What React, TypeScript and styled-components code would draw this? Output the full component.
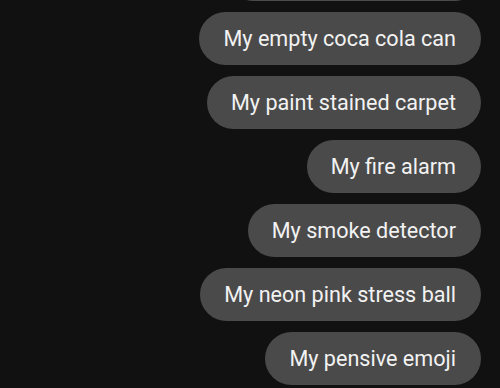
import React from "react";
import styled, { createGlobalStyle } from "styled-components";

const Global = createGlobalStyle`
  html, body { margin: 0; padding: 0; background: #111111; }
  body { width: 500px; height: 388px; overflow: hidden; }
`;

const Thread = styled.div`
  display: flex;
  flex-direction: column;
  align-items: flex-end;
  gap: 11px;
  padding-right: 19px;
  margin-top: -52px;
`;

const Bubble = styled.div`
  box-sizing: border-box;
  height: 53px;
  display: flex;
  align-items: center;
  padding: 0 25px 0 24px;
  border-radius: 27px;
  background: #4a4a4a;
  color: #f2f2f2;
  font-family: Roboto, "Noto Sans", sans-serif;
  font-size: 21.6px;
  white-space: nowrap;
`;

const messages = [
  "My broken desk lamp",
  "My empty coca cola can",
  "My paint stained carpet",
  "My fire alarm",
  "My smoke detector",
  "My neon pink stress ball",
  "My pensive emoji",
];

export default function App() {
  return (
    <>
      <Global />
      <Thread>
        {messages.map((m) => (
          <Bubble key={m}>{m}</Bubble>
        ))}
      </Thread>
    </>
  );
}
